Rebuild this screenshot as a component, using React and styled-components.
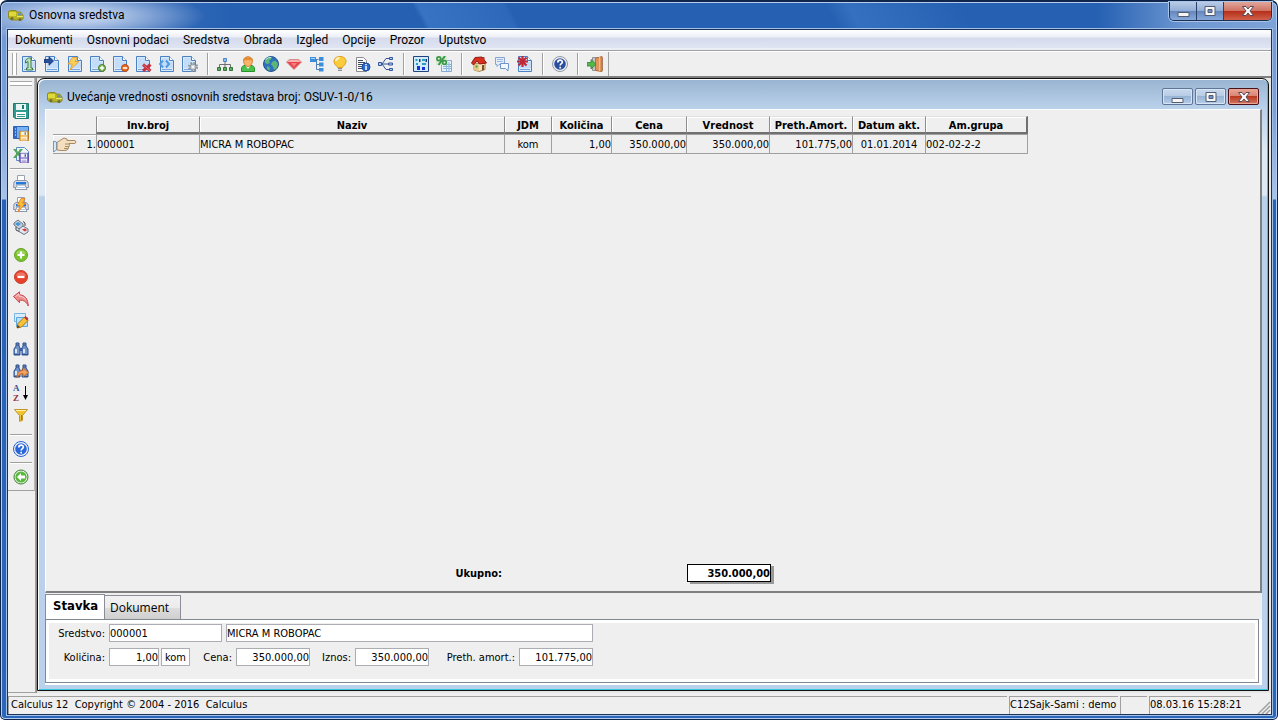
import React from 'react';
import styled, { createGlobalStyle, css } from 'styled-components';

const uiFont = `Roboto, 'Open Sans', sans-serif`;
const tabFont = `'Open Sans', 'Noto Sans', sans-serif`;
const smallFont = `'DejaVu Sans Condensed', 'DejaVu Sans', sans-serif`;

const GlobalStyle = createGlobalStyle`
* { box-sizing: border-box; }
body { margin: 0; font-family: ${smallFont}; font-size: 11px; color: #000000; }
button, input { font: inherit; color: inherit; margin: 0; border-radius: 0; }
button { padding: 0; border: none; background: none; }
svg { display: block; }
`

/* ---------- main window ---------- */
const Frame = styled.div`
display: flex;
flex-direction: column;
min-height: 100vh;
padding: 0 5px 4px 6px;
border: 1px solid #10254a;
border-top-width: 2px;
border-radius: 7px 7px 5px 5px;
box-shadow: inset 0 0 0 1px #b4cdf0;
background:
  radial-gradient(ellipse 130px 26px at 75px 14px, rgba(190, 208, 236, 0.95) 25%, rgba(130, 162, 210, 0) 100%) no-repeat,
  linear-gradient(90deg, #5b86c8 0, rgba(91, 134, 200, 0) 230px) 0 0 / 100% 28px no-repeat,
  linear-gradient(62deg, transparent 375px, #3872c2 380px, #2e68ba 455px, transparent 460px) 0 0 / 100% 28px no-repeat,
  linear-gradient(62deg, transparent 740px, #3570c0 760px, transparent 860px) 0 0 / 100% 28px no-repeat,
  linear-gradient(90deg, transparent calc(100% - 180px), #6f98d2 calc(100% - 90px), #7ea3d8 100%) 0 0 / 100% 28px no-repeat,
  linear-gradient(#2560b2, #2560b2) 0 0 / 100% 28px no-repeat,
  linear-gradient(#6f97d2 0, #7ba0d8 110px, #a9c3e8 197px, #2762b6 198px, #2a66b9 100%);
`
const TitleBar = styled.header`
display: flex;
align-items: flex-start;
height: 27px;
padding-left: 1px;
`
const Title = styled.h1`
flex: 1;
display: flex;
align-items: center;
gap: 5px;
height: 26px;
margin: 0;
font-family: ${uiFont};
font-size: 12px;
font-weight: 400;
`
const Captions = styled.div`
display: flex;
border: 1px solid #1c2f52;
border-top: none;
border-radius: 0 0 5px 5px;
box-shadow: 0 0 0 1px #a9c4ea;
overflow: hidden;
`
const CaptionButton = styled.button`
display: flex;
align-items: center;
justify-content: center;
width: ${p => p.$close ? 47 : 27}px;
height: 18px;
border-right: 1px solid #2b416a;
background: ${p => p.$close
  ? 'linear-gradient(#e0a79c 0, #cf7464 48%, #b52e1a 50%, #d0614a 100%)'
  : 'linear-gradient(#b9cbe6 0, #93aed6 48%, #6586bb 50%, #86a9dc 100%)'};
&:last-child { border-right: none; }
`
const Body = styled.div`
flex: 1;
display: flex;
flex-direction: column;
border: 1px solid #1b3158;
box-shadow: 0 0 0 1px #a3c0e8;
background: #efefef;
`
const MenuBar = styled.nav`
display: flex;
height: 21px;
border-bottom: 1px solid #a0a0a0;
box-shadow: inset 0 -2px 0 #eceef5;
background: linear-gradient(#ffffff 0, #eceff7 7px, #d5dbec 8px, #e2e6f4 100%);
`
const MenuItem = styled.button`
padding: 0 7px;
font-family: ${uiFont};
font-size: 12px;
line-height: 19px;
`
const ToolBar = styled.div`
display: flex;
align-items: center;
height: 27px;
padding-left: 4px;
border-top: 1px solid #ffffff;
border-bottom: 2px solid #808080;
`
const ToolButton = styled.button`
display: flex;
align-items: center;
justify-content: center;
width: 23px;
height: 22px;
`
const Divider = styled.div`
width: 12px;
height: 22px;
border-left: 6px solid transparent;
background: linear-gradient(90deg, #a0a0a0 1px, #ffffff 1px, #ffffff 2px, transparent 2px);
background-origin: padding-box;
background-clip: padding-box;
`
const Grip = styled.div`
width: ${p => p.$across ? 'auto' : '5px'};
height: ${p => p.$across ? '5px' : '22px'};
border: 1px solid #a8a8a8;
border-width: ${p => p.$across ? '1px 0' : '0 1px'};
background: #ffffff;
`
const BarEnd = styled.div`
width: 3px;
height: 24px;
border-right: 1px solid #a0a0a0;
`
const Middle = styled.div`
flex: 1;
display: flex;
`
const SideColumn = styled.aside`
width: 28px;
border-right: 1px solid #a0a0a0;
border-bottom: 1px solid #a0a0a0;
`
const SideBar = styled.div`
padding: 3px 2px 2px;
border-right: 1px solid #b8b8b8;
border-bottom: 1px solid #a0a0a0;
`
const SideGroup = styled.div`
display: flex;
flex-direction: column;
align-items: center;
padding-top: ${p => p.$first ? 14 : 0}px;
`
const SideGap = styled.div`
height: ${p => p.$tall ? 12 : 6}px;
${p => p.$line && css`
border-top: ${p.$tall ? 8 : 2}px solid transparent;
background: linear-gradient(#a0a0a0 1px, #ffffff 1px, #ffffff 2px, transparent 2px);
background-origin: padding-box;
background-clip: padding-box;
`}
`
const Workspace = styled.main`
flex: 1;
display: flex;
padding: 0 2px 2px 1px;
background: linear-gradient(90deg, #8c8c8c 1px, #e6e6e6 1px);
`

/* ---------- document window ---------- */
const Child = styled.section`
flex: 1;
display: flex;
flex-direction: column;
padding: 0 6px 5px 7px;
border: 1px solid #101010;
border-radius: 7px 7px 0 0;
box-shadow: inset 1px 1px 0 #ffffff, inset -1px -1px 0 #35c8e0;
background: linear-gradient(#98b3d1 0, #bad1ea 29px, #dde8f4 70px, #dde8f4 116px, #b9d1ea 118px);
`
const ChildTitle = styled.header`
display: flex;
align-items: center;
justify-content: space-between;
height: 30px;
padding: 5px 0 0 2px;
`
const ChildName = styled.h2`
display: flex;
align-items: center;
gap: 4px;
margin: 0;
font-family: ${uiFont};
font-size: 12px;
font-weight: 400;
`
const ChildCaptions = styled.div`
display: flex;
gap: 2px;
padding-right: 3px;
`
const ChildCaption = styled.button`
display: flex;
align-items: center;
justify-content: center;
width: 31px;
height: 17px;
border: 1px solid ${p => p.$close ? '#4b1018' : '#5f7697'};
border-radius: 2px;
box-shadow: inset 0 0 0 1px ${p => p.$close ? '#e8a898' : '#d6e4f4'};
background: ${p => p.$close
  ? 'linear-gradient(#e7a596 0, #db8472 48%, #b93a20 50%, #d57660 100%)'
  : 'linear-gradient(#c8d9ed 0, #b6cbe4 48%, #98b4d5 50%, #b4cde9 100%)'};
`
const Sheet = styled.div`
flex: 1;
display: flex;
flex-direction: column;
justify-content: space-between;
padding: 6px 7px 9px;
border: 1px solid #ffffff;
border-right: 2px solid #808080;
border-bottom: 2px solid #808080;
background: #efefef;
`
const Grid = styled.table`
width: 975px;
table-layout: fixed;
border-collapse: separate;
border-spacing: 0;
`
const HeadCell = styled.th`
height: 18px;
padding: 2px 0 0;
border-left: 1px solid #8c8c8c;
border-top: 1px solid #e0e0e0;
border-bottom: 2px solid #707070;
box-shadow: inset 1px 1px 0 #ffffff;
font-size: 11px;
line-height: 13px;
white-space: nowrap;
&:last-child { border-right: 2px solid #707070; }
`
const Corner = styled.td`
padding: 0;
`
const Cell = styled.td`
height: 20px;
padding: 2px 0 0;
border: 1px solid #a0a0a0;
border-width: 1px 0 1px 1px;
line-height: 16px;
text-align: ${p => p.$align || 'left'};
white-space: nowrap;
&:last-child { border-right: 1px solid #a0a0a0; }
`
const RowHead = styled.th`
height: 20px;
padding: 2px 0 0;
border-top: 1px solid #a0a0a0;
border-bottom: 1px solid #a0a0a0;
box-shadow: inset 1px 1px 0 #ffffff;
font-weight: 400;
line-height: 16px;
`
const RowMark = styled.div`
display: flex;
justify-content: space-between;
height: 16px;
`
const Totals = styled.div`
display: flex;
align-items: center;
`
const TotalLabel = styled.label`
width: 449px;
text-align: right;
font-weight: 700;
`
const TotalBox = styled.input`
width: 84px;
height: 18px;
margin-left: 185px;
padding: 0;
border: 1px solid #000000;
box-shadow: 3px 2px 0 #999999;
background: #ffffff;
text-align: right;
&& { font-weight: 700; }
`
const Tabs = styled.div`
display: flex;
align-items: flex-end;
padding-top: 1px;
background: #efefef;
`
const Tab = styled.button`
width: ${p => p.$on ? 60 : 76}px;
height: ${p => p.$on ? 25 : 24}px;
border: 1px solid #8b8e96;
border-bottom: none;
background: ${p => p.$on ? '#ffffff' : 'linear-gradient(#f2f2f2 0, #ebebeb 50%, #dddddd 52%, #cfcfcf 100%)'};
text-align: left;
&& {
  padding: ${p => p.$on ? '0 0 4px 7px' : '0 0 1px 5px'};
  font-family: ${p => p.$on ? smallFont : tabFont};
  font-size: ${p => p.$on ? 13 : 12}px;
  font-weight: ${p => p.$on ? 700 : 400};
}
& + & { border-left: none; }
`
const Panel = styled.div`
padding: 0 3px 2px 0;
background: #ffffff;
`
const Form = styled.form`
display: flex;
flex-direction: column;
gap: 6px;
height: 64px;
padding: 2px 8px;
border: 1px solid #828790;
outline: 3px solid #ffffff;
outline-offset: -4px;
background: #efefef;
`
const FormRow = styled.div`
display: flex;
align-items: center;
padding-top: 2px;
& + & { padding-top: 0; }
`
const Label = styled.label`
width: ${p => p.$width}px;
padding-right: 4px;
text-align: right;
white-space: nowrap;
`
const Field = styled.input`
width: ${p => p.$width}px;
height: 18px;
margin-right: ${p => p.$gap || 0}px;
padding: 0;
border: 1px solid #abadb3;
background: #ffffff;
text-align: ${p => p.$align || 'left'};
`
const StatusBar = styled.footer`
display: flex;
height: 21px;
padding-top: 3px;
`
const StatusCell = styled.div`
width: ${p => p.$width}px;
flex: ${p => p.$width ? 'none' : '1'};
margin-right: 2px;
padding-left: ${p => p.$width ? 0 : 2}px;
border-top: 1px solid #a0a0a0;
border-left: 1px solid #a0a0a0;
line-height: 16px;
white-space: pre;
`

/* ---------- icons ---------- */
const Svg = ({ w = 16, h = 16, children }) => (
    <svg width={w} height={h} viewBox={`0 0 ${w} ${h}`} fill="none" aria-hidden="true">{children}</svg>
);

const Sheet16 = ({ x = 1, children }) => (
    <Svg>
        <path d={`M${x + .5} .5h9l4 4v11h-13z`} fill="#dbeafb" stroke="#4a80c4" />
        <path d={`M${x + 2} 2h7v4h4v6h-11z`} fill="#c3dcf8" />
        <path d={`M${x + 9.5} .5v4h4`} fill="#ffffff" stroke="#4a80c4" />
        <path d={`M${x + 2} 13.5h10`} stroke="#7aa6dc" />
        {children}
    </Svg>
);

const Truck = () => (
    <Svg>
        <path d="M.5 4.5l2-1h5.5l1 1.5h3.500l2.500 3v4l-2 1H3l-2.500-2z" fill="#b9b41f" stroke="#8a8a2c" />
        <path d="M1 5h7v4H1z" fill="#ddd83c" />
        <path d="M10 6h2.500l1.500 2.500h-4z" fill="#6f8fa8" />
        <path d="M9 9.500h6" stroke="#e9e66a" />
        <circle cx="4" cy="11.500" r="1.500" fill="#6b6b3c" />
        <circle cx="12" cy="12.500" r="1.500" fill="#6b6b3c" />
    </Svg>
);
const House = () => (
    <Svg>
        <path d="M3 8v6l5 1.500 6-2V7z" fill="#f4e6b8" stroke="#a5804a" />
        <path d="M8 9v6.500l-5-1.500V8z" fill="#e3c88e" />
        <path d="M.5 7L4 1.500 11 1l4.500 6-7 1L6 5 2.500 9z" fill="#d8301c" stroke="#8d1d12" />
        <path d="M11 9h2v5l-2 .5z" fill="#7b5130" />
        <path d="M4.500 9.500h2v2h-2z" fill="#4e9a3c" />
        <path d="M12 1h1.500v3l-1.500-2z" fill="#b03222" />
    </Svg>
);
const Help = ({ rim = '#8f96a3', face = '#2b4f9e' }) => (
    <Svg>
        <circle cx="8" cy="8" r="7.500" fill="#eef2f8" stroke={rim} />
        <circle cx="8" cy="8" r="5.800" fill={face} />
        <path d="M5.800 6.500c0-3.200 4.600-3 4.600-.4 0 1.600-2.200 1.500-2.200 3.300M8.200 10.800v1.700" stroke="#ffffff" strokeWidth="1.700" />
    </Svg>
);
const Binoculars = ({ children }) => (
    <Svg>
        <path d="M3 2h3v3l1 2v7H1V8l2-3zM10 2h3v3l2 3v6H9V7l1-2z" fill="#6f93ca" stroke="#2f4f8d" />
        <path d="M7 7h2v3H7z" fill="#38599a" />
        <path d="M3 8v4M11 8v4" stroke="#dce8f8" strokeWidth="2" />
        <path d="M3 4h3M10 4h3M1 13.500h6M9 13.500h6" stroke="#36548c" />
        {children}
    </Svg>
);
const Printer = ({ children }) => (
    <Svg>
        <path d="M4.500 .5h7v6h-7z" fill="#ffffff" stroke="#9aa3b0" />
        <path d="M1 7l2-1.500h10L15 7l.5 5.500h-15z" fill="#d7dce6" stroke="#8b94a5" />
        <path d="M3 7h10v2.500H3z" fill="#2378dc" />
        <path d="M4 10h8l2 4.500H2z" fill="#ffffff" stroke="#8d96a6" />
        <path d="M4 12.500h8" stroke="#a9cdf0" />
        {children}
    </Svg>
);
const Disk = ({ x = 0, y = 0, s = 16, fill = '#2f9c8f', rim = '#237a70' }) => (
    <g transform={`translate(${x} ${y}) scale(${s / 16})`}>
        <path d="M.5 .5h15v15H2l-1.500-1.500z" fill={fill} stroke={rim} />
        <path d="M3 1h10v6H3z" fill="#e8f5f3" />
        <path d="M9 2h2v4H9z" fill={rim} />
        <path d="M3 9h10v6H3z" fill="#ffffff" />
        <path d="M4 11.500h8M4 13.500h8" stroke={fill} />
    </g>
);
const Round = ({ fill, rim, children }) => (
    <Svg>
        <circle cx="8" cy="8" r="6.500" fill={fill} stroke={rim} />
        <path d="M3 6.500a5.500 5.500 0 0 1 10 0q-5 2-10 0z" fill="#ffffff" opacity=".28" />
        {children}
    </Svg>
);

const icons = {
    docOne: <Sheet16><path d="M4.500 4.500l3-2.500H10v10h1.500v2h-6v-2H7V5.500L4.500 7z" fill="#c4e4bd" stroke="#3a7a49" /></Sheet16>,
    docGo: <Sheet16><path d="M0 3.500h5V.8L9.500 5 5 9.200V6.500H0z" fill="#274f9f" stroke="#14306e" strokeWidth=".8" /></Sheet16>,
    docFlash: <Sheet16><path d="M5.500 1.500h5L8 5.500h4L3 14l2.500-6H1z" fill="#fbd05a" stroke="#e09a28" strokeWidth=".8" /></Sheet16>,
    docAdd: <Sheet16 x={0}><circle cx="12" cy="12" r="3.500" fill="#7cb652" stroke="#4b7d38" /><path d="M12 9.800v4.400M9.800 12h4.400" stroke="#fff" strokeWidth="1.400" /></Sheet16>,
    docRemove: <Sheet16 x={0}><circle cx="12" cy="12" r="3.500" fill="#f06a1e" stroke="#b8480e" /><path d="M9.800 12h4.400" stroke="#fff" strokeWidth="1.600" /></Sheet16>,
    docDelete: <Sheet16 x={0}><path d="M7 8.500l7.500 6.500M14.500 8.500L7 15" stroke="#c23340" strokeWidth="3" /><path d="M7.500 9l6.500 5.500" stroke="#ea6670" /></Sheet16>,
    docLink: <Sheet16 x={1}><path d="M4 4.500L1 8l3 3.500M7 4.500L10 8l-3 3.500" stroke="#4f9be2" strokeWidth="2" /></Sheet16>,
    docGear: <Sheet16 x={0}><circle cx="11" cy="11" r="4" fill="none" stroke="#8d96a2" strokeWidth="2.200" strokeDasharray="1.800 1.340" /><circle cx="11" cy="11" r="3" fill="#c9ced6" stroke="#8d96a2" /><circle cx="11" cy="11" r="1.200" fill="#f4f6f8" /></Sheet16>,
    tree: (
        <Svg>
            <path d="M8 5v4M2.500 11V8.500h11V11M8 8.500V11" stroke="#707070" />
            <path d="M6.500 2.500h3v3h-3z" fill="#8ebdf0" stroke="#4a86c6" />
            <path d="M.5 11.500h3v3h-3zM6.500 11.500h3v3h-3zM12.500 11.500h3v3h-3z" fill="#68a764" stroke="#2f7438" />
        </Svg>
    ),
    user: (
        <Svg>
            <path d="M1.500 15.500v-2.500c0-2.500 1.500-3.500 3.500-3.500h6c2 0 3.500 1 3.500 3.500v2.500z" fill="#4cc24a" stroke="#269229" />
            <path d="M5.500 9.500L8 13l2.500-3.500" fill="#fff" />
            <path d="M3.500 4.500c0-5 9-5 9 0 0 3-2 6-4.500 6s-4.500-3-4.500-6z" fill="#f8b469" stroke="#d2802d" />
            <path d="M3.500 5C3 0 13 0 12.500 5 10 3.500 6 3.500 3.500 5z" fill="#e38c35" />
        </Svg>
    ),
    globe: (
        <Svg>
            <circle cx="8" cy="8" r="7.500" fill="#2f72bb" stroke="#24538d" />
            <path d="M2 3.500c2-2.500 5-3 7-2.500L8 3.500l-2 1L7 7l-2.500 1L2 7zM9 6l3-1.500 3 3L14 12l-3 2-1-3.500-2-2zM4 10l3 1.500L6.500 15 4 13z" fill="#5cb67a" />
            <path d="M3 3.500Q5 1 8 1.500" stroke="#b8e0f4" />
        </Svg>
    ),
    ruby: (
        <Svg>
            <path d="M.5 6L3.500 3.500h9l3 2.500L8 13.500z" fill="#e8424a" stroke="#d88a8c" />
            <path d="M3.500 4h9l2.500 2H1z" fill="#f8b0ae" />
            <path d="M5 7h6l-3 4z" fill="#f27a7c" />
        </Svg>
    ),
    nodes: (
        <Svg>
            <path d="M5.500 3.500h4M7.500 3.500v10h3M7.500 8.500h3" stroke="#4f7fb8" />
            <path d="M1 1h6v5H1zM10 1h4.500v4H10zM10 6.500h4.500v4H10zM10 12h4.500v3.500H10z" fill="#3a8fdc" />
            <path d="M2 2.500h4" stroke="#a7d5f7" />
        </Svg>
    ),
    bulb: (
        <Svg>
            <path d="M5 10.500C-.5 6 2 .5 8 .5s8.500 5.500 3 10l-.5 1h-5z" fill="#fbcc3a" stroke="#dfa02a" />
            <path d="M4 5c0-2 1.500-3 3.500-3" stroke="#fff6c8" strokeWidth="1.800" />
            <path d="M6 12.500h4M6 14.500h4" stroke="#8f8f8f" />
            <path d="M6 13.500h4" stroke="#d2d2d2" />
        </Svg>
    ),
    docInfo: (
        <Svg>
            <path d="M1.500 1.500h7l3 3v11h-10z" fill="#fafafa" stroke="#8b8b8b" />
            <path d="M3 4.500h5M3 6.500h7M3 8.500h5M3 10.500h4M3 12.500h4" stroke="#3d4a63" />
            <circle cx="11" cy="11" r="4" fill="#2a6bd0" stroke="#1c4a9c" />
            <path d="M11 10v4M11 8v1.200" stroke="#fff" strokeWidth="1.500" />
        </Svg>
    ),
    branch: (
        <Svg>
            <path d="M2 8h8M4 8l4-5.500h4M4 8l4 5.500h4" stroke="#33549a" />
            <path d="M.5 6.500h3v3h-3zM11.500 1.500h3v2h-3zM10.500 7h4v2h-4zM11.500 12.500h3v2h-3z" fill="#b9cdec" stroke="#33549a" />
        </Svg>
    ),
    chart: (
        <Svg>
            <path d="M.5 .5h15v15H.5z" fill="#cfeafa" stroke="#24437e" />
            <path d="M2.500 3h2v2h-2zM3 7h2v2H3zM9 3h3v2H9zM9 7h4v2H9z" fill="#2a9fc0" />
            <path d="M4 10h3v4H4zM9 11h3v3H9z" fill="#1432d8" />
            <path d="M6 3h1.500v3H6zM12.500 3H14v3h-1.500z" fill="#18406e" />
        </Svg>
    ),
    percent: (
        <Svg>
            <path d="M5.500 4.500h10v11h-10z" fill="#e8f2fc" stroke="#86a9d4" />
            <path d="M7 8.500h8M7 10.500h8M7 12.500h8M10.500 6v9M13 6v9" stroke="#8fb6de" />
            <path d="M0 0h11v9H0z" fill="#cfe8cf" opacity=".8" />
            <path d="M2.500 9L9 0" stroke="#3c9848" strokeWidth="2" />
            <circle cx="2.800" cy="2.800" r="1.900" stroke="#3c9848" strokeWidth="1.700" />
            <circle cx="8.500" cy="6.500" r="1.900" stroke="#3c9848" strokeWidth="1.700" />
        </Svg>
    ),
    house: <House />,
    chat: (
        <Svg>
            <path d="M1.500 1.500h9v7H5l-2 2V8.500H1.500z" fill="#e3edf9" stroke="#86a4cf" />
            <path d="M3 3.500h6M3 5.500h6" stroke="#9db9de" />
            <path d="M6.500 7.500h8v5H14V15l-2.500-2.500h-5z" fill="#f2f7fd" stroke="#6f95cd" />
        </Svg>
    ),
    docStar: <Sheet16><path d="M5.500 0v11M0 5.500h11M1.500 1.500l8 8M9.500 1.500l-8 8" stroke="#bf2a38" strokeWidth="2.200" /></Sheet16>,
    help: <Help />,
    exit: (
        <Svg>
            <path d="M5.500 1.500h10v13h-10z" fill="#c6c6c6" stroke="#919191" />
            <path d="M8.500 2.500l6.500-2v15l-6.500-1z" fill="#e2955a" stroke="#b96a32" />
            <path d="M12.500 1v14" stroke="#f3bd8a" />
            <path d="M0 6.500h4v-3L9 8.300 4 13v-3H0z" fill="#54b948" stroke="#2f8431" strokeWidth=".8" />
        </Svg>
    ),
    save: <Svg><Disk /></Svg>,
    saveForm: <Svg><path d="M.5 1.500h15v12H.5z" fill="#78b1f2" stroke="#2d62b4" /><path d="M1 2h3v11H1z" fill="#2f69c0" /><path d="M2 4h1M2 7h1M2 10h1" stroke="#fff" /><Disk x={6} y={6} s={10} fill="#f0a020" rim="#b26c0c" /></Svg>,
    saveExcel: <Svg><path d="M3.500 .5h8l4 4v9h-12z" fill="#eef5fc" stroke="#5b8cc8" /><path d="M0 2h3l2 3 2-3h3L6.500 6.500 10 11H7L5 8 3 11H0l3.500-4.500z" fill="#54a757" /><Disk x={6} y={6} s={10} fill="#7b68c8" rim="#4c3c98" /></Svg>,
    print: <Printer />,
    printFlash: <Printer><path d="M8 1.500h4L9.500 6h3L5 15l2-6.500H4z" fill="#fbbd36" stroke="#df7b20" strokeWidth=".8" /></Printer>,
    printPair: (
        <Svg>
            <path d="M1 4l4-3 5 4v4l-4 1-5-4z" fill="#c6ced9" stroke="#6c7583" />
            <path d="M2 5l3-2 3 2-3 2z" fill="#3a97d8" />
            <path d="M6 10l4-3 5 3v3l-4 2.500-5-3z" fill="#e2e5ea" stroke="#6c7583" />
            <path d="M9 10.500l3-1 2 1.500-2 1.500z" fill="#d8323a" />
            <path d="M3 8v3l3 1.500M10 2.500l2 1.500v3" stroke="#3d4652" />
        </Svg>
    ),
    add: <Round fill="#78c22a" rim="#6ba32c"><path d="M8 4.500v7M4.500 8h7" stroke="#fff" strokeWidth="2.200" /></Round>,
    remove: <Round fill="#e8402a" rim="#c5402e"><path d="M4.500 8h7" stroke="#fff" strokeWidth="2.200" /></Round>,
    undo: <Svg><path d="M.5 5.500L6.500 .8v3c5 0 8.500 4 8.800 11.200-2.300-4.500-4.500-6-8.800-5.800v2.500z" fill="#ee8c8c" stroke="#c64a50" /><path d="M2.500 5.500L6 3v2.200c3 0 5 1.200 6.500 3.300" stroke="#fbd0cf" /></Svg>,
    edit: (
        <Svg>
            <path d="M1.500 .5h11v8h-11z" fill="#d8ecfa" stroke="#78b5e2" />
            <path d="M3.500 4.500h11v9h-11z" fill="#b9def5" stroke="#5ea7dc" />
            <path d="M4 15l1-4.500L11.500 4l3.500 3.500L8.500 14z" fill="#f6c23a" stroke="#a67818" />
            <path d="M11 4.500L12.500 3l3 3L14 7.500z" fill="#c0303a" />
            <path d="M4 15l.8-3 2.200 2z" fill="#4d3a1c" />
        </Svg>
    ),
    find: <Binoculars />,
    findNext: <Binoculars><path d="M4 15c0-5 2-7.500 6-7.500V5l5.500 4.500-5.500 4v-3c-3 0-4.500 1.500-6 4.500z" fill="#f2a25c" stroke="#c96d28" /></Binoculars>,
    sort: (
        <Svg h={22}>
            <text x="0" y="9" fontFamily="Liberation Serif, serif" fontSize="9" fontWeight="700" fill="#35569a">A</text>
            <text x="0" y="19" fontFamily="Liberation Serif, serif" fontSize="9" fontWeight="700" fill="#93333c">Z</text>
            <path d="M12.500 4v12" stroke="#000" />
            <path d="M10 13h5l-2.500 5z" fill="#000" />
        </Svg>
    ),
    filter: <Svg><path d="M1.500 2.500h13L9.500 8.500v5l-3 .8V8.500z" fill="#f0c534" stroke="#c1952a" /><path d="M3 3.500h10" stroke="#fff1a6" /><path d="M8.500 8v5" stroke="#a5791a" /></Svg>,
    helpBlue: <Help rim="#2c61cf" face="#2a66da" />,
    back: <Svg><circle cx="8" cy="8" r="7" fill="#e9f6e4" stroke="#3b7f31" /><circle cx="8" cy="8" r="5.600" fill="#57b83c" /><path d="M4 8l4-4v2.500h4v3H8V12z" fill="#fff" /></Svg>,
};

const Hand = () => (
    <Svg w={24} h={16}>
        <path d="M.5 4l3 1v8l-3 2z" fill="#d3e7f7" stroke="#6f9dc8" />
        <path d="M4 5.500l3-2 4-2.500 3 1v1.500h8l1 1.500-1 1.500h-6l.5 2-.8 1.500-.7 2-2 1.500H8l-4-.5z" fill="#f3dfc0" stroke="#a88962" />
        <path d="M12 7h4M12 9.500h4M11 11.500h4" stroke="#a88962" />
    </Svg>
);
const MinGlyph = () => <Svg w={13} h={12}><path d="M1 7.500h11v4H1z" fill="#f5f5f5" stroke="#515c70" /></Svg>;
const MaxGlyph = () => <Svg w={12} h={10}><path d="M1 .5h10v9H1z" fill="#f5f5f5" stroke="#515c70" /><path d="M4 3.500h4v3H4z" fill="#6d93c6" stroke="#515c70" /></Svg>;
const CloseGlyph = () => <Svg w={12} h={10}><path d="M.5 .5h3.500L6 3l2-2.500h3.500L8 5l3.500 4.500H8L6 7 4 9.500H.5L4 5z" fill="#f8f8f8" stroke="#5a4a58" /></Svg>;

/* ---------- data ---------- */
const menu = ['Dokumenti', 'Osnovni podaci', 'Sredstva', 'Obrada', 'Izgled', 'Opcije', 'Prozor', 'Uputstvo'];
const tools = [
    ['docOne', 'docGo', 'docFlash', 'docAdd', 'docRemove', 'docDelete', 'docLink', 'docGear'],
    ['tree', 'user', 'globe', 'ruby', 'nodes', 'bulb', 'docInfo', 'branch'],
    ['chart', 'percent'],
    ['house', 'chat', 'docStar'],
    ['help'],
    ['exit'],
];
const sideTools = [
    { items: ['save', 'saveForm', 'saveExcel'], line: true },
    { items: ['print', 'printFlash', 'printPair'] },
    { items: ['add', 'remove', 'undo', 'edit'] },
    { items: ['find', 'findNext', 'sort', 'filter'], line: true, tall: true },
    { items: ['helpBlue'], line: true },
    { items: ['back'], last: true },
];
const columns = [
    { name: 'Inv.broj', width: 103, value: '000001' },
    { name: 'Naziv', width: 305, value: 'MICRA M ROBOPAC' },
    { name: 'JDM', width: 47, value: 'kom', align: 'center' },
    { name: 'Količina', width: 60, value: '1,00', align: 'right' },
    { name: 'Cena', width: 75, value: '350.000,00', align: 'right' },
    { name: 'Vrednost', width: 83, value: '350.000,00', align: 'right' },
    { name: 'Preth.Amort.', width: 83, value: '101.775,00', align: 'right' },
    { name: 'Datum akt.', width: 73, value: '01.01.2014', align: 'center' },
    { name: 'Am.grupa', width: 103, value: '002-02-2-2' },
];

const App = () => {
    return (
        <>
        <GlobalStyle />
        <Frame>
            <TitleBar>
                <Title><Truck />Osnovna sredstva</Title>
                <Captions>
                    <CaptionButton aria-label="Minimize"><MinGlyph /></CaptionButton>
                    <CaptionButton aria-label="Maximize"><MaxGlyph /></CaptionButton>
                    <CaptionButton $close aria-label="Close"><CloseGlyph /></CaptionButton>
                </Captions>
            </TitleBar>
            <Body>
                <MenuBar>
                    {menu.map(m => <MenuItem key={m}>{m}</MenuItem>)}
                </MenuBar>
                <ToolBar>
                    <Grip />
                    {tools.map((group, i) => (
                        <React.Fragment key={i}>
                            {i > 0 && <Divider />}
                            {group.map(t => <ToolButton key={t} aria-label={t}>{icons[t]}</ToolButton>)}
                        </React.Fragment>
                    ))}
                    <BarEnd />
                </ToolBar>
                <Middle>
                    <SideColumn>
                        <SideBar>
                            <Grip $across />
                            {sideTools.map((g, i) => (
                                <React.Fragment key={i}>
                                    <SideGroup $first={i === 0}>
                                        {g.items.map(t => <ToolButton key={t} aria-label={t}>{icons[t]}</ToolButton>)}
                                    </SideGroup>
                                    {!g.last && <SideGap $line={g.line} $tall={g.tall} />}
                                </React.Fragment>
                            ))}
                        </SideBar>
                    </SideColumn>
                    <Workspace>
                        <Child>
                            <ChildTitle>
                                <ChildName><Truck />Uvećanje vrednosti osnovnih sredstava broj: OSUV-1-0/16</ChildName>
                                <ChildCaptions>
                                    <ChildCaption aria-label="Minimize"><MinGlyph /></ChildCaption>
                                    <ChildCaption aria-label="Maximize"><MaxGlyph /></ChildCaption>
                                    <ChildCaption $close aria-label="Close"><CloseGlyph /></ChildCaption>
                                </ChildCaptions>
                            </ChildTitle>
                            <Sheet>
                                <Grid>
                                    <colgroup>
                                        <col width="43" />
                                        {columns.map(c => <col key={c.name} width={c.width} />)}
                                    </colgroup>
                                    <thead>
                                        <tr>
                                            <Corner />
                                            {columns.map(c => <HeadCell key={c.name}>{c.name}</HeadCell>)}
                                        </tr>
                                    </thead>
                                    <tbody>
                                        <tr>
                                            <RowHead scope="row"><RowMark><Hand />1.</RowMark></RowHead>
                                            {columns.map(c => <Cell key={c.name} $align={c.align}>{c.value}</Cell>)}
                                        </tr>
                                    </tbody>
                                </Grid>
                                <Totals>
                                    <TotalLabel htmlFor="ukupno">Ukupno:</TotalLabel>
                                    <TotalBox id="ukupno" readOnly value="350.000,00" />
                                </Totals>
                            </Sheet>
                            <Tabs role="tablist">
                                <Tab $on role="tab" aria-selected="true">Stavka</Tab>
                                <Tab role="tab" aria-selected="false">Dokument</Tab>
                            </Tabs>
                            <Panel>
                                <Form>
                                    <FormRow>
                                        <Label $width={55} htmlFor="sredstvo">Sredstvo:</Label>
                                        <Field id="sredstvo" $width={113} $gap={4} defaultValue="000001" />
                                        <Field aria-label="Naziv" $width={367} defaultValue="MICRA M ROBOPAC" />
                                    </FormRow>
                                    <FormRow>
                                        <Label $width={55} htmlFor="kolicina">Količina:</Label>
                                        <Field id="kolicina" $width={50} $gap={2} $align="right" defaultValue="1,00" />
                                        <Field aria-label="JDM" $width={29} $align="center" defaultValue="kom" />
                                        <Label $width={46} htmlFor="cena">Cena:</Label>
                                        <Field id="cena" $width={74} $align="right" defaultValue="350.000,00" />
                                        <Label $width={45} htmlFor="iznos">Iznos:</Label>
                                        <Field id="iznos" $width={74} $align="right" defaultValue="350.000,00" />
                                        <Label $width={90} htmlFor="amort">Preth. amort.:</Label>
                                        <Field id="amort" $width={74} $align="right" defaultValue="101.775,00" />
                                    </FormRow>
                                </Form>
                            </Panel>
                        </Child>
                    </Workspace>
                </Middle>
                <StatusBar>
                    <StatusCell>Calculus 12  Copyright © 2004 - 2016  Calculus</StatusCell>
                    <StatusCell $width={109}>C12Sajk-Sami : demo</StatusCell>
                    <StatusCell $width={27}> </StatusCell>
                    <StatusCell $width={102}>08.03.16 15:28:21</StatusCell>
                    <Svg w={18} h={18}><path d="M17 6L5 18M17 10L9 18M17 14l-4 4" stroke="#a0a0a0" strokeWidth="1.500" /></Svg>
                </StatusBar>
            </Body>
        </Frame>
        </>
    );
}

export default App;
